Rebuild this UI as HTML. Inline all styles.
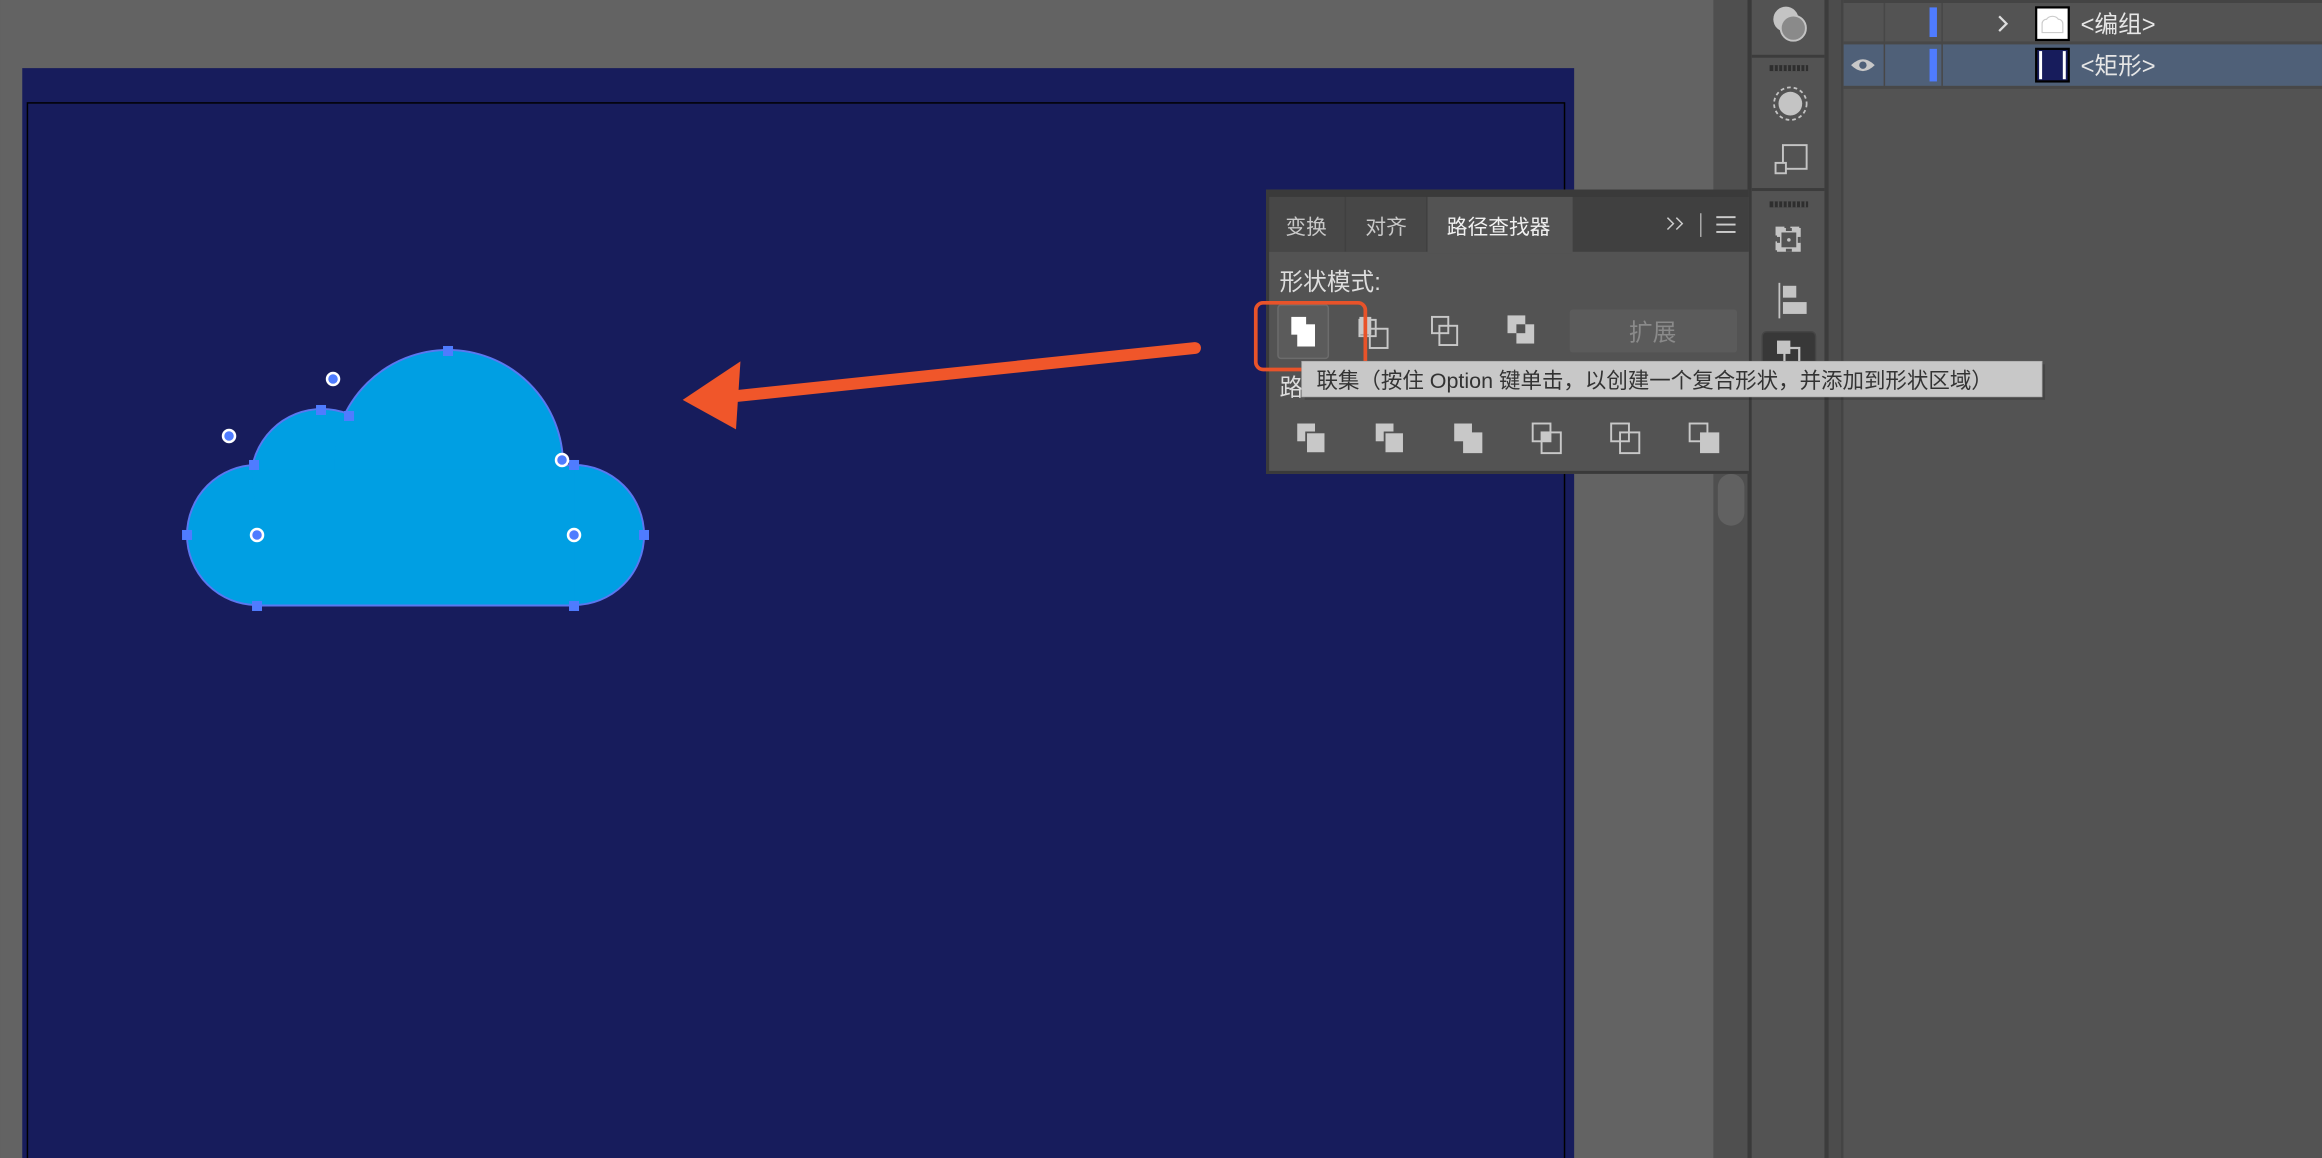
<!DOCTYPE html>
<html><head><meta charset="utf-8"><style>
html,body{margin:0;padding:0;background:#646464;overflow:hidden}
svg{display:block}
text{font-family:"Liberation Sans","Noto Sans CJK SC",sans-serif}
</style></head><body>
<svg width="2322" height="1158" viewBox="0 0 1568 782" xmlns="http://www.w3.org/2000/svg">
<rect width="1568" height="782" fill="#636363"/>
<!-- artboard -->
<rect x="15" y="46" width="1048" height="736" fill="#171c5c"/>
<rect x="18.5" y="69.5" width="1038" height="720" fill="none" stroke="#000" stroke-width="1"/>
<!-- cloud in full-res coords -->
<g transform="scale(0.67528)">
 <g fill="#009fe3" stroke="#5a78f0" stroke-width="2">
  <circle cx="257" cy="535" r="70"/><circle cx="574" cy="535" r="70"/>
  <circle cx="322" cy="480" r="71"/><circle cx="448" cy="465" r="115"/>
 </g>
 <g fill="#009fe3">
  <circle cx="257" cy="535" r="69"/><circle cx="574" cy="535" r="69"/>
  <circle cx="322" cy="480" r="70"/><circle cx="448" cy="465" r="114"/>
  <rect x="257" y="470" width="317" height="135"/>
 </g>
 <line x1="257" y1="605.5" x2="574" y2="605.5" stroke="#5a78f0" stroke-width="2"/>
 <g fill="#4f7cff">
  <rect x="443" y="346" width="10" height="10"/><rect x="316" y="405" width="10" height="10"/>
  <rect x="344" y="411" width="10" height="10"/><rect x="249" y="460" width="10" height="10"/>
  <rect x="569" y="460" width="10" height="10"/><rect x="182" y="530" width="10" height="10"/>
  <rect x="639" y="530" width="10" height="10"/><rect x="252" y="601" width="10" height="10"/>
  <rect x="569" y="601" width="10" height="10"/>
 </g>
 <g fill="#4f7cff" stroke="#fff" stroke-width="2.5">
  <circle cx="333" cy="379" r="6"/><circle cx="229" cy="436" r="6"/>
  <circle cx="562" cy="460" r="6"/><circle cx="257" cy="535" r="6"/><circle cx="574" cy="535" r="6"/>
 </g>
</g>
<!-- arrow -->
<line x1="807" y1="235" x2="492" y2="268" stroke="#f0562a" stroke-width="8" stroke-linecap="round"/>
<polygon points="461,270 500,244 497,290" fill="#f0562a"/>
<!-- right scroll area -->
<rect x="1157" y="0" width="23" height="782" fill="#4f4f4f"/>
<rect x="1160" y="320" width="18" height="35" rx="9" fill="#616161"/>
<rect x="1180" y="0" width="3" height="782" fill="#3a3a3a"/>
<rect x="1183" y="0" width="49" height="782" fill="#535353"/>
<rect x="1232" y="0" width="3" height="782" fill="#3c3c3c"/>
<rect x="1235" y="0" width="8" height="782" fill="#4c4c4c"/>
<rect x="1243" y="0" width="2" height="782" fill="#444"/>
<rect x="1245" y="0" width="323" height="782" fill="#535353"/>
<!-- tool strip -->
<rect x="1183" y="37" width="49" height="2" fill="#3c3c3c"/>
<rect x="1183" y="127" width="49" height="2" fill="#3c3c3c"/>
<circle cx="1206" cy="13" r="8.5" fill="#c4c4c4"/><circle cx="1211" cy="19" r="8.5" fill="#8a8a8a" stroke="#c4c4c4" stroke-width="1.3"/>
<g fill="#2e2e2e"><rect x="1195" y="44" width="26" height="4"/><rect x="1195" y="136" width="26" height="4"/></g>
<g stroke="#535353" stroke-width="1"><line x1="1198" y1="44" x2="1198" y2="48"/><line x1="1201" y1="44" x2="1201" y2="48"/><line x1="1204" y1="44" x2="1204" y2="48"/><line x1="1207" y1="44" x2="1207" y2="48"/><line x1="1210" y1="44" x2="1210" y2="48"/><line x1="1213" y1="44" x2="1213" y2="48"/><line x1="1216" y1="44" x2="1216" y2="48"/><line x1="1219" y1="44" x2="1219" y2="48"/>
<line x1="1198" y1="136" x2="1198" y2="140"/><line x1="1201" y1="136" x2="1201" y2="140"/><line x1="1204" y1="136" x2="1204" y2="140"/><line x1="1207" y1="136" x2="1207" y2="140"/><line x1="1210" y1="136" x2="1210" y2="140"/><line x1="1213" y1="136" x2="1213" y2="140"/><line x1="1216" y1="136" x2="1216" y2="140"/><line x1="1219" y1="136" x2="1219" y2="140"/></g>
<circle cx="1209" cy="70" r="8" fill="#c4c4c4"/><circle cx="1209" cy="70" r="11" fill="none" stroke="#c4c4c4" stroke-width="1.2" stroke-dasharray="2.5 2"/>
<rect x="1204" y="98" width="16" height="16" fill="none" stroke="#c4c4c4" stroke-width="1.3"/>
<rect x="1199" y="110" width="7" height="7" fill="#535353" stroke="#c4c4c4" stroke-width="1.3"/>
<rect x="1203" y="237" width="0" height="0"/>
<path d="M1200 154 h4 v2 h6 v-2 h4 v4 h-2 v6 h2 v4 h-4 v-2 h-6 v2 h-4 v-4 h2 v-6 h-2 z" fill="none" stroke="#c4c4c4" stroke-width="2"/>
<path d="M1200 154 h16 v16 h-16 z" fill="#c4c4c4"/>
<rect x="1203" y="157" width="10" height="10" fill="#535353"/>
<rect x="1200" y="160" width="2" height="4" fill="#535353"/><rect x="1214" y="160" width="2" height="4" fill="#535353"/>
<rect x="1206" y="154" width="4" height="2" fill="#535353"/><rect x="1206" y="168" width="4" height="2" fill="#535353"/>
<circle cx="1208" cy="162" r="1.2" fill="#c4c4c4"/>
<rect x="1201" y="191" width="1.2" height="24" fill="#c4c4c4"/>
<rect x="1204" y="193" width="9" height="8" fill="#c4c4c4"/><rect x="1204" y="204" width="16" height="8" fill="#c4c4c4"/>
<rect x="1190" y="224" width="36" height="32" rx="3" fill="#383838" stroke="#454545"/>
<rect x="1200" y="230" width="9" height="9" fill="#c4c4c4"/><rect x="1205" y="235" width="10" height="10" fill="none" stroke="#c4c4c4" stroke-width="1.5"/>
<!-- layers -->
<rect x="1245" y="0" width="323" height="2" fill="#444"/>
<rect x="1245" y="28" width="323" height="2" fill="#484848"/>
<rect x="1245" y="30" width="323" height="28" fill="#4f6078"/>
<rect x="1245" y="58" width="323" height="2" fill="#484848"/>
<rect x="1272" y="2" width="1" height="56" fill="#474747"/>
<rect x="1311" y="2" width="1" height="56" fill="#474747"/>
<rect x="1303" y="5" width="5" height="20" fill="#4f7cff"/><rect x="1303" y="33" width="5" height="22" fill="#4f7cff"/>
<path d="M1350 11 L1355 16 L1350 21" fill="none" stroke="#ddd" stroke-width="1.5"/>
<rect x="1375" y="5" width="22" height="22" fill="#fff" stroke="#000" stroke-width="1.5"/>
<path d="M1379 22 h14 v-6 a3 3 0 0 0 -3 -3 a5 5 0 0 0 -8 0 a3 3 0 0 0 -3 3 z" fill="none" stroke="#ccc" stroke-width="0.8"/>
<rect x="1375" y="33" width="22" height="22" fill="#171c5c" stroke="#000" stroke-width="1.5"/>
<rect x="1377" y="34.5" width="2" height="19" fill="#fff"/><rect x="1393" y="34.5" width="2" height="19" fill="#fff"/>
<text x="1405" y="22" font-size="16" fill="#e6e6e6">&lt;编组&gt;</text>
<text x="1405" y="50" font-size="16" fill="#e6e6e6">&lt;矩形&gt;</text>
<path d="M1250 44 q8 -8 16 0 q-8 8 -16 0 z" fill="#c8c8c8"/><circle cx="1258" cy="44" r="2.5" fill="#4f6078"/>
<!-- panel -->
<rect x="855" y="128" width="326" height="192" fill="#535353"/>
<rect x="855" y="128" width="326" height="5" fill="#3a3a3a"/>
<rect x="855" y="133" width="326" height="37" fill="#404040"/>
<rect x="857" y="133" width="51" height="37" fill="#474747"/>
<rect x="909" y="133" width="54" height="37" fill="#474747"/>
<rect x="964" y="133" width="98" height="38" fill="#535353"/>
<rect x="855" y="128" width="2" height="192" fill="#3a3a3a"/>
<rect x="855" y="318" width="326" height="2" fill="#3a3a3a"/>
<text x="868" y="158" font-size="14" fill="#c8c8c8">变换</text>
<text x="922" y="158" font-size="14" fill="#c8c8c8">对齐</text>
<text x="977" y="158" font-size="14" fill="#f0f0f0">路径查找器</text>
<path d="M1126 147 l4 4 l-4 4 M1132 147 l4 4 l-4 4" fill="none" stroke="#ccc" stroke-width="1"/>
<rect x="1148" y="144" width="1" height="16" fill="#aaa"/>
<g fill="#ccc"><rect x="1159" y="146" width="13" height="1.3"/><rect x="1159" y="151" width="13" height="1.3"/><rect x="1159" y="156" width="13" height="1.3"/></g>
<text x="864" y="196" font-size="16" fill="#ddd">形状模式:</text>
<rect x="863" y="206" width="34" height="36" rx="2" fill="#5b5b5b" stroke="#6c6c6c"/>
<rect x="872" y="214" width="10" height="12" fill="#fff"/><rect x="876" y="219" width="12" height="15" fill="#fff"/>
<g fill="none" stroke="#c8c8c8" stroke-width="1.3">
 <rect x="918" y="216" width="11" height="11"/><rect x="925" y="222" width="12" height="13"/>
 <rect x="967" y="214" width="11" height="11"/><rect x="972" y="220" width="12" height="13"/>
</g>
<rect x="918" y="214" width="8" height="12" fill="#c8c8c8"/>
<rect x="1018" y="213" width="12" height="12" fill="#c8c8c8"/><rect x="1024" y="219" width="12" height="13" fill="#c8c8c8"/><rect x="1024" y="219" width="6" height="6" fill="#535353"/>
<rect x="1060" y="209" width="113" height="29" rx="2" fill="#5b5b5b"/>
<text x="1100" y="230" font-size="16" fill="#8a8a8a">扩展</text>
<rect x="848" y="204.5" width="74" height="45" rx="5" fill="none" stroke="#e8532a" stroke-width="2.5"/>
<text x="864" y="267" font-size="16" fill="#ddd">路</text>
<g fill="#c8c8c8">
 <rect x="876" y="286" width="12" height="12"/><rect x="882" y="292" width="13" height="14" stroke="#535353" stroke-width="1.2"/>
 <rect x="929" y="286" width="12" height="12"/><rect x="935" y="292" width="13" height="14" stroke="#535353" stroke-width="1.2"/>
 <rect x="982" y="286" width="12" height="12"/><rect x="988" y="292" width="13" height="14"/>
 <rect x="1148" y="292" width="13" height="14"/>
</g>
<g fill="none" stroke="#c8c8c8" stroke-width="1.3">
 <rect x="1035" y="286" width="12" height="12"/><rect x="1041" y="292" width="13" height="14"/>
 <rect x="1088" y="286" width="12" height="12"/><rect x="1094" y="292" width="13" height="14"/>
 <rect x="1141" y="286" width="12" height="12"/>
</g>
<rect x="1041" y="292" width="6" height="6" fill="#c8c8c8"/>
<!-- tooltip -->
<rect x="881" y="246" width="500" height="24" fill="#000" opacity="0.15"/>
<rect x="879" y="244" width="500" height="24" fill="#c8c8c8" stroke="#aaa" stroke-width="0.5"/>
<text x="889" y="262" font-size="14.5" fill="#333">联集（按住 Option 键单击，以创建一个复合形状，并添加到形状区域）</text>
</svg>
</body></html>
